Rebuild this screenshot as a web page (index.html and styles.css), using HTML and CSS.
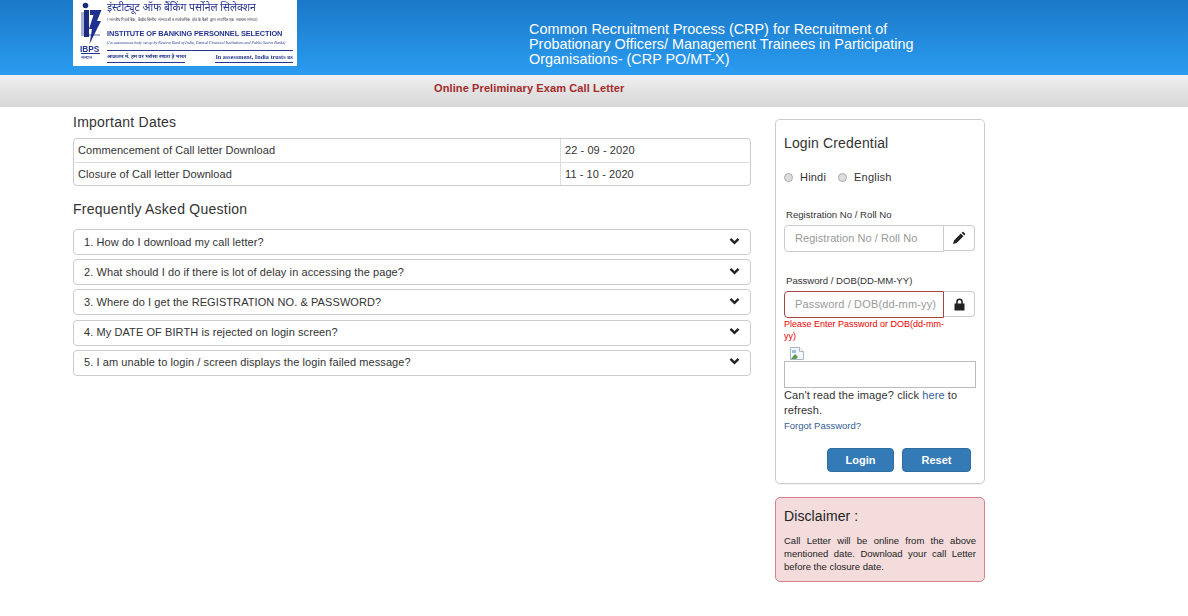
FILE: index.html
```html
<!DOCTYPE html>
<html lang="en">
<head>
<meta charset="utf-8">
<title>Online Preliminary Exam Call Letter</title>
<link rel="stylesheet" href="styles.css">
</head>
<body>
<header class="top">
  <div class="logo">
    <svg class="emblem" viewBox="0 0 27 66" width="27" height="66">
      <circle cx="5.500" cy="5.500" r="2.800" fill="#1a2a7a"/>
      <path d="M1 12h3v22h16v2H1z" fill="#aab2d4"/>
      <path d="M4 10h5v27H4z" fill="#1c2c80"/>
      <path d="M10 10h11.500l-4.500 11h4L9.500 44l2.500-15H9l4.500-14H10z" fill="#20308f"/>
      <text x="0" y="51.500" class="em-ibps">IBPS</text>
      <path d="M1 53h19v1H1z" fill="#25358f"/>
      <text x="1" y="58.500" class="em-hi">संस्थान</text>
    </svg>
    <div class="logo-text">
      <div class="logo-hi">इंस्टीट्यूट ऑफ बैंकिंग पर्सोनेल सिलेक्शन</div>
      <div class="logo-tiny">(भारतीय रिज़र्व बैंक, केंद्रीय वित्तीय संस्थाओं व सार्वजनिक क्षेत्र के बैंकों द्वारा स्थापित एक स्वायत्त संस्था)</div>
      <div class="logo-en">INSTITUTE OF BANKING PERSONNEL SELECTION</div>
      <div class="logo-sub">(An autonomous body set up by Reserve Bank of India, Central Financial Institutions and Public Sector Banks)</div>
      <div class="logo-foot"><span class="logo-left">आकलन में, हम पर भरोसा रखता है भारत</span><span class="logo-trust">In assessment, India trusts us</span></div>
    </div>
  </div>
  <h1 class="title">Common Recruitment Process (CRP) for Recruitment of Probationary Officers/ Management Trainees in Participating Organisations- (CRP PO/MT-X)</h1>
</header>
<div class="subbar"><span>Online Preliminary Exam Call Letter</span></div>
<main class="wrap">
  <section class="left">
    <h2 class="head">Important Dates</h2>
    <div class="dates">
      <div class="row"><div class="cell-a">Commencement of Call letter Download</div><div class="cell-b">22 - 09 - 2020</div></div>
      <div class="row"><div class="cell-a">Closure of Call letter Download</div><div class="cell-b">11 - 10 - 2020</div></div>
    </div>
    <h2 class="head faq-head">Frequently Asked Question</h2>
    <div class="faq">
      <div class="q"><span>1. How do I download my call letter?</span><svg class="chev" viewBox="0 0 12 8"><path d="M1.600 1.600 6 6l4.400-4.400" fill="none" stroke="#222" stroke-width="2.600"/></svg></div>
      <div class="q"><span>2. What should I do if there is lot of delay in accessing the page?</span><svg class="chev" viewBox="0 0 12 8"><path d="M1.600 1.600 6 6l4.400-4.400" fill="none" stroke="#222" stroke-width="2.600"/></svg></div>
      <div class="q"><span>3. Where do I get the REGISTRATION NO. &amp; PASSWORD?</span><svg class="chev" viewBox="0 0 12 8"><path d="M1.600 1.600 6 6l4.400-4.400" fill="none" stroke="#222" stroke-width="2.600"/></svg></div>
      <div class="q"><span>4. My DATE OF BIRTH is rejected on login screen?</span><svg class="chev" viewBox="0 0 12 8"><path d="M1.600 1.600 6 6l4.400-4.400" fill="none" stroke="#222" stroke-width="2.600"/></svg></div>
      <div class="q"><span>5. I am unable to login / screen displays the login failed message?</span><svg class="chev" viewBox="0 0 12 8"><path d="M1.600 1.600 6 6l4.400-4.400" fill="none" stroke="#222" stroke-width="2.600"/></svg></div>
    </div>
  </section>
  <aside class="right">
    <form class="panel">
      <h3 class="panel-title">Login Credential</h3>
      <div class="langs">
        <span class="radio"></span><span class="lang">Hindi</span>
        <span class="radio"></span><span class="lang">English</span>
      </div>
      <label class="lbl lbl-reg">Registration No / Roll No</label>
      <div class="group">
        <div class="field">Registration No / Roll No</div>
        <div class="addon"><svg width="14" height="14" viewBox="0 0 14 14"><path d="M1 13l1-3.600 6.800-6.800 2.600 2.600L4.600 12zM9.600 1.800l.8-.8c.3-.3.7-.3 1 0l1.600 1.600c.3.3.3.7 0 1l-.8.8z" fill="#222"/></svg></div>
      </div>
      <label class="lbl lbl-pass">Password / DOB(DD-MM-YY)</label>
      <div class="group">
        <div class="field field-err">Password / DOB(dd-mm-yy)</div>
        <div class="addon"><svg width="11" height="13" viewBox="0 0 11 13"><path d="M3 6V3.800a2.500 2.500 0 0 1 5 0V6" fill="none" stroke="#222" stroke-width="1.600"/><rect x=".5" y="5.500" width="10" height="7" fill="#222"/></svg></div>
      </div>
      <div class="err">Please Enter Password or DOB(dd-mm-yy)</div>
      <svg class="broken" width="14" height="13" viewBox="0 0 14 13"><path d="M.5.500h9l4 4v8H.5z" fill="#f4f7fb" stroke="#a9b4c4"/><path d="M9.500.500v4h4" fill="#fff" stroke="#a9b4c4"/><path d="M1 12l4-5 3 3-2 2z" fill="#5a9a4a"/><path d="M2 3h4v3H2z" fill="#9cc0ea"/></svg>
      <div class="captcha"></div>
      <p class="cant">Can't read the image? click <a class="here">here</a> to refresh.</p>
      <a class="forgot">Forgot Password?</a>
      <div class="btns">
        <button type="button" class="btn btn-login">Login</button>
        <button type="button" class="btn btn-reset">Reset</button>
      </div>
    </form>
    <div class="disc">
      <h3 class="disc-title">Disclaimer :</h3>
      <p class="disc-text">Call Letter will be online from the above mentioned date. Download your call Letter before the closure date.</p>
    </div>
  </aside>
</main>
</body>
</html>
```
FILE: styles.css
```css
* { box-sizing: border-box; }
html, body { margin: 0; padding: 0; }
body { background: #fff; color: #333; font-family: "Liberation Sans", Arial, sans-serif; font-size: 12px; height: 616px; overflow: hidden; }
.top { height: 75px; background: linear-gradient(#1b78c8, #2a9cf0); display: flex; padding-left: 73px; }
.logo { width: 224px; height: 66px; background: #fff; display: flex; overflow: hidden; padding: 0 0 0 7px; }
.emblem { flex: none; filter: blur(.3px); }
.em-ibps { font: 700 8.300px "Liberation Sans", sans-serif; fill: #25358f; }
.em-hi { font: 4.500px "Noto Sans", "DejaVu Sans", sans-serif; fill: #25358f; }
.logo-text { width: 186px; color: #1f2f8f; white-space: nowrap; overflow: hidden; filter: blur(.25px); }
.logo-hi { font: 10.400px/14px "Noto Sans", "DejaVu Sans", sans-serif; color: #2a3590; }
.logo-tiny { font: 4.200px/12px "DejaVu Sans", sans-serif; height: 15px; color: #445; overflow: hidden; }
.logo-en { font: bold 7.400px/10px "Liberation Sans", sans-serif; letter-spacing: -.1px; color: #25358f; }
.logo-sub { font: italic 4px/8px "Liberation Serif", serif; border-bottom: 1px solid #25358f; color: #25358f; height: 12px; }
.logo-foot { display: flex; justify-content: space-between; font: bold 6.200px/11px "Liberation Serif", serif; color: #25358f; }
.logo-left { width: 78px; border-bottom: 1px solid #25358f; height: 12px; font: bold 5px/11px "Noto Sans", "DejaVu Sans", sans-serif; }
.logo-trust { width: 78px; text-align: right; border-bottom: 1px solid #25358f; height: 12px; }
.title { margin: 22px 0 0 232px; width: 400px; color: #fff; font-size: 14.400px; line-height: 15px; font-weight: 400; }
.subbar { height: 32px; background: linear-gradient(#f0f0f0, #d6d6d6); padding-left: 434px; line-height: 27px; }
.subbar span { color: #a52a2a; font-weight: 700; font-size: 11px; letter-spacing: .11px; }
.wrap { display: flex; padding: 7px 0 0 73px; gap: 24px; }
.left { width: 678px; }
.head { margin: 0; font-size: 14px; line-height: 16px; font-weight: 400; color: #333; letter-spacing: .25px; }
.dates { margin-top: 8px; border: 1px solid #ccc; border-radius: 4px; height: 48px; }
.row { display: flex; height: 23px; line-height: 23px; letter-spacing: .075px; font-size: 11px; }
.row + .row { border-top: 1px solid #ddd; line-height: 22px; }
.cell-a { width: 487px; padding-left: 4px; border-right: 1px solid #ddd; }
.cell-b { padding-left: 4px; letter-spacing: .08px; }
.faq-head { margin-top: 15px; }
.faq { margin-top: 12px; display: flex; flex-direction: column; gap: 4.200px; }
.q { height: 26px; flex: none; border: 1px solid #ccc; border-radius: 4px; display: flex; justify-content: space-between; align-items: center; padding: 0 10px; font-size: 11px; line-height: 13px; letter-spacing: .085px; }
.chev { width: 11px; height: 8px; margin-top: -3px; }
.right { width: 210px; margin-top: 5px; }
.panel { height: 365px; border: 1px solid #ccc; border-radius: 5px; padding: 15px 8px 0; display: flex; flex-direction: column; box-shadow: 0 1px 1px rgba(0,0,0,.05); }
.panel-title { margin: 0; font-size: 14px; line-height: 16px; font-weight: 400; letter-spacing: .15px; }
.langs { margin-top: 19px; display: flex; align-items: center; height: 14px; font-size: 11px; letter-spacing: .2px; }
.radio { width: 9px; height: 9px; border-radius: 50%; background: #ddd; border: 1px solid #aaa; margin-right: 7px; }
.lang { margin-right: 12px; }
.lbl { display: block; font-size: 9.600px; line-height: 12px; margin-left: 2px; }
.lbl-reg { margin-top: 25px; }
.lbl-pass { margin-top: 24px; }
.group { display: flex; margin-top: 4px; width: 191px; height: 26px; flex: none; }
.field { width: 160px; height: 27px; border: 1px solid #ccc; border-radius: 4px 0 0 4px; color: #999; font-size: 11px; line-height: 25px; padding-left: 10px; white-space: nowrap; overflow: hidden; letter-spacing: .05px; }
.field-err { border-color: #a94442; letter-spacing: .15px; }
.addon { flex: 1; border: 1px solid #ccc; border-left: 0; border-radius: 0 4px 4px 0; display: flex; align-items: center; justify-content: center; }
.err { margin-top: 1px; width: 165px; color: #e60000; font-size: 9px; line-height: 12px; }
.broken { margin: 5px 0 0 6px; display: block; flex: none; }
.captcha { margin-top: 1px; width: 192px; height: 27px; border: 1px solid #bbb; flex: none; }
.cant { margin: 0; font-size: 11px; line-height: 15px; letter-spacing: .1px; width: 192px; }
.here { color: #33609a; }
.forgot { color: #33609a; font-size: 9.500px; line-height: 15px; margin-top: 0; }
.btns { display: flex; justify-content: flex-end; gap: 8px; margin: 15px 5px 0 0; }
.btn { height: 24px; border: 1px solid #2e6da4; background: #337ab7; color: #fff; border-radius: 4px; font: 700 11px "Liberation Sans", sans-serif; padding: 0; }
.btn-login { width: 67px; }
.btn-reset { width: 69px; }
.disc { margin-top: 13px; height: 85px; background: #f4dcdc; border: 1px solid #d9808a; border-radius: 5px; padding: 10px 8px 0; }
.disc-title { margin: 0; font-size: 14px; line-height: 16px; font-weight: 400; letter-spacing: .1px; color: #222; }
.disc-text { margin: 10px 0 0; font-size: 9.500px; line-height: 13px; text-align: justify; color: #222; }
```
